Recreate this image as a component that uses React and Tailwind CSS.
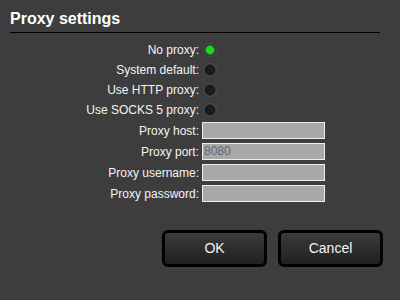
import React from 'react';

const font = { fontFamily: '"Liberation Sans", Arial, sans-serif' };

const Radio = ({ checked }) => (
  <div className="ml-[1px] w-[14px] h-[14px] rounded-full bg-[#333333] border border-[#4c4c4c] flex items-center justify-center">
    <div
      className={
        checked
          ? 'w-[10px] h-[10px] rounded-full bg-[#1fd51f] border border-[#128f12]'
          : 'w-[10px] h-[10px] rounded-full bg-[#1c1c1c] border border-[#141414]'
      }
    />
  </div>
);

const Field = ({ value }) => (
  <div className="w-[123px] h-[17px] border border-[#efefef] bg-[#a8a8a8] text-[12px] leading-[15px] text-[#5f6670] pl-[1px]">
    {value}
  </div>
);

const Row = ({ label, h, children }) => (
  <div className={`flex items-center ${h}`}>
    <div className="w-[202px] text-right pr-[3px] text-[12px] text-[#f4f4f4] whitespace-nowrap">{label}</div>
    {children}
  </div>
);

const Button = ({ children }) => (
  <button className="w-[105px] h-[37px] rounded-[6px] border-[3px] border-black bg-gradient-to-b from-[#3b3b3b] to-[#202020] text-[14px] text-[#f4f4f4]">
    {children}
  </button>
);

export default function App() {
  return (
    <div className="w-[400px] h-[300px] bg-[#3d3d3d] overflow-hidden" style={font}>
      <div className="mx-[10px] w-[370px] pt-[9px] pb-[3px] border-b border-black">
        <h1 className="text-[16px] leading-[20px] font-bold text-white">Proxy settings</h1>
      </div>

      <div className="mt-[7px]">
        <Row label="No proxy:" h="h-[20px]"><Radio checked /></Row>
        <Row label="System default:" h="h-[20px]"><Radio /></Row>
        <Row label="Use HTTP proxy:" h="h-[20px]"><Radio /></Row>
        <Row label="Use SOCKS 5 proxy:" h="h-[20px]"><Radio /></Row>
      </div>

      <div>
        <Row label="Proxy host:" h="h-[21px]"><Field /></Row>
        <Row label="Proxy port:" h="h-[21px]"><Field value="8080" /></Row>
        <Row label="Proxy username:" h="h-[21px]"><Field /></Row>
        <Row label="Proxy password:" h="h-[21px]"><Field /></Row>
      </div>

      <div className="flex justify-end gap-[11px] pr-[17px] mt-[26px]">
        <Button>OK</Button>
        <Button>Cancel</Button>
      </div>
    </div>
  );
}
